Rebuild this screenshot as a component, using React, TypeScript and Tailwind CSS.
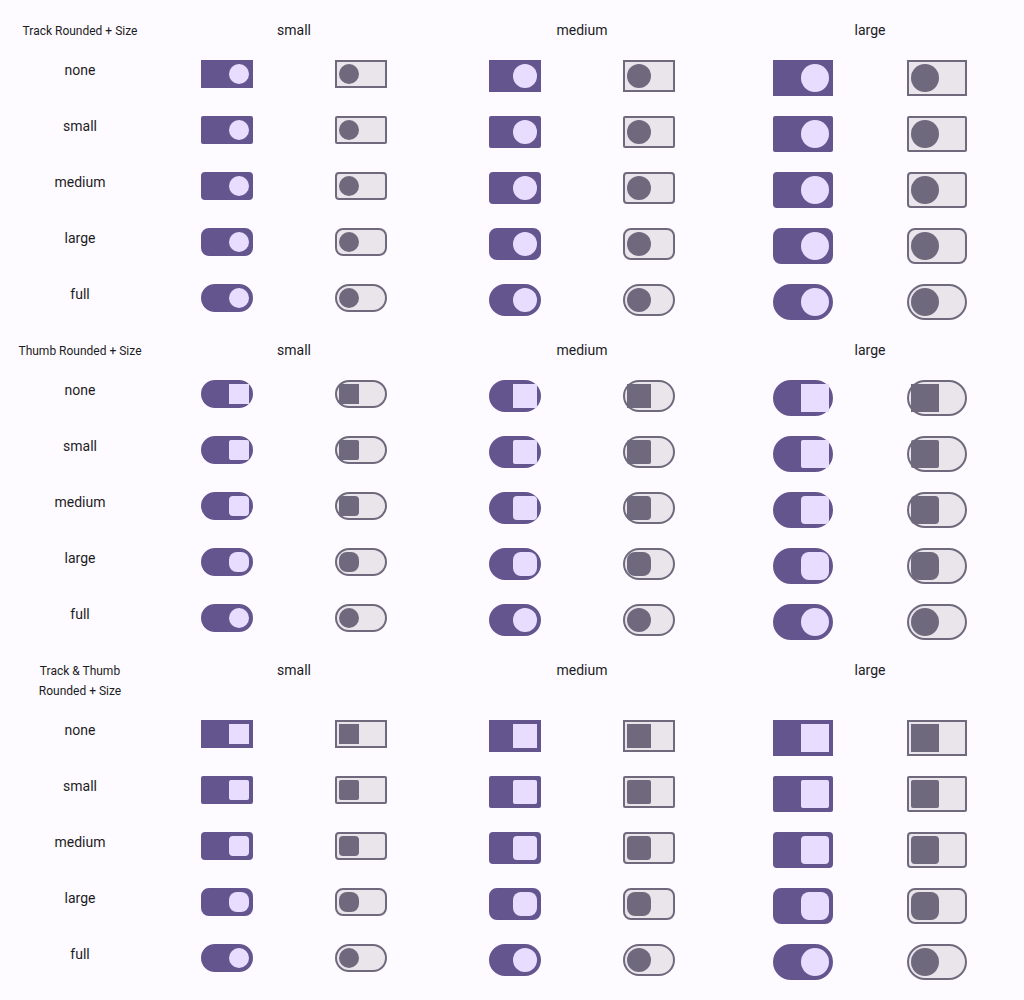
import { Fragment } from "react";
import clsx from "clsx";

type Rounded = "none" | "small" | "medium" | "large" | "full";
type Size = "small" | "medium" | "large";

const roundings: Rounded[] = ["none", "small", "medium", "large", "full"];
const sizes: Size[] = ["small", "medium", "large"];

const trackRadius: Record<Rounded, string> = {
  none: "rounded-none",
  small: "rounded-xs",
  medium: "rounded-sm",
  large: "rounded-lg",
  full: "rounded-full",
};

const thumbRadius: Record<Rounded, string> = {
  none: "before:rounded-none",
  small: "before:rounded-xs",
  medium: "before:rounded-sm",
  large: "before:rounded-lg",
  full: "before:rounded-full",
};

const dimensions: Record<Size, string> = {
  small: "h-7 w-13 before:size-5",
  medium: "h-8 w-13 before:size-6",
  large: "h-9 w-15 before:size-7",
};

interface SwitchProps {
  size: Size;
  track: Rounded;
  thumb: Rounded;
  label: string;
  defaultChecked?: boolean;
}

function Switch({ size, track, thumb, label, defaultChecked }: SwitchProps) {
  return (
    <input
      type="checkbox"
      role="switch"
      aria-label={label}
      defaultChecked={defaultChecked}
      className={clsx(
        "flex shrink-0 cursor-pointer appearance-none items-center justify-start border-2 border-[#6f697e] bg-[#e9e5eb] p-0.5",
        "before:block before:bg-[#6f697e] before:content-['']",
        "checked:justify-end checked:border-[#65558f] checked:bg-[#65558f] checked:before:bg-[#e8ddff]",
        dimensions[size],
        trackRadius[track],
        thumbRadius[thumb],
      )}
    />
  );
}

interface Group {
  title: string;
  track?: Rounded;
  thumb?: Rounded;
}

const groups: Group[] = [
  { title: "Track Rounded + Size", thumb: "full" },
  { title: "Thumb Rounded + Size", track: "full" },
  { title: "Track & Thumb\nRounded + Size" },
];

export default function App() {
  return (
    <main className="min-h-screen bg-[#fdfbff] p-5 font-['Roboto',sans-serif] text-sm/5 text-[#1c1b1e]">
      <div className="grid grid-cols-[120px_repeat(3,minmax(0,1fr))] items-start gap-5 text-center">
        {groups.map((group) => (
          <Fragment key={group.title}>
            <h2 className="-mx-2 whitespace-pre-line">
              <small className="text-xs/none">{group.title}</small>
            </h2>
            {sizes.map((size) => (
              <h3 key={size}>{size}</h3>
            ))}
            {roundings.map((rounded) => (
              <Fragment key={rounded}>
                <div>{rounded}</div>
                {sizes.map((size) => (
                  <div key={size} className="grid h-9 grid-cols-2 items-start justify-items-center">
                    {[true, false].map((on) => (
                      <Switch
                        key={String(on)}
                        size={size}
                        track={group.track ?? rounded}
                        thumb={group.thumb ?? rounded}
                        label={`${group.title}: ${rounded}, ${size}, ${on ? "on" : "off"}`}
                        defaultChecked={on}
                      />
                    ))}
                  </div>
                ))}
              </Fragment>
            ))}
          </Fragment>
        ))}
      </div>
    </main>
  );
}
